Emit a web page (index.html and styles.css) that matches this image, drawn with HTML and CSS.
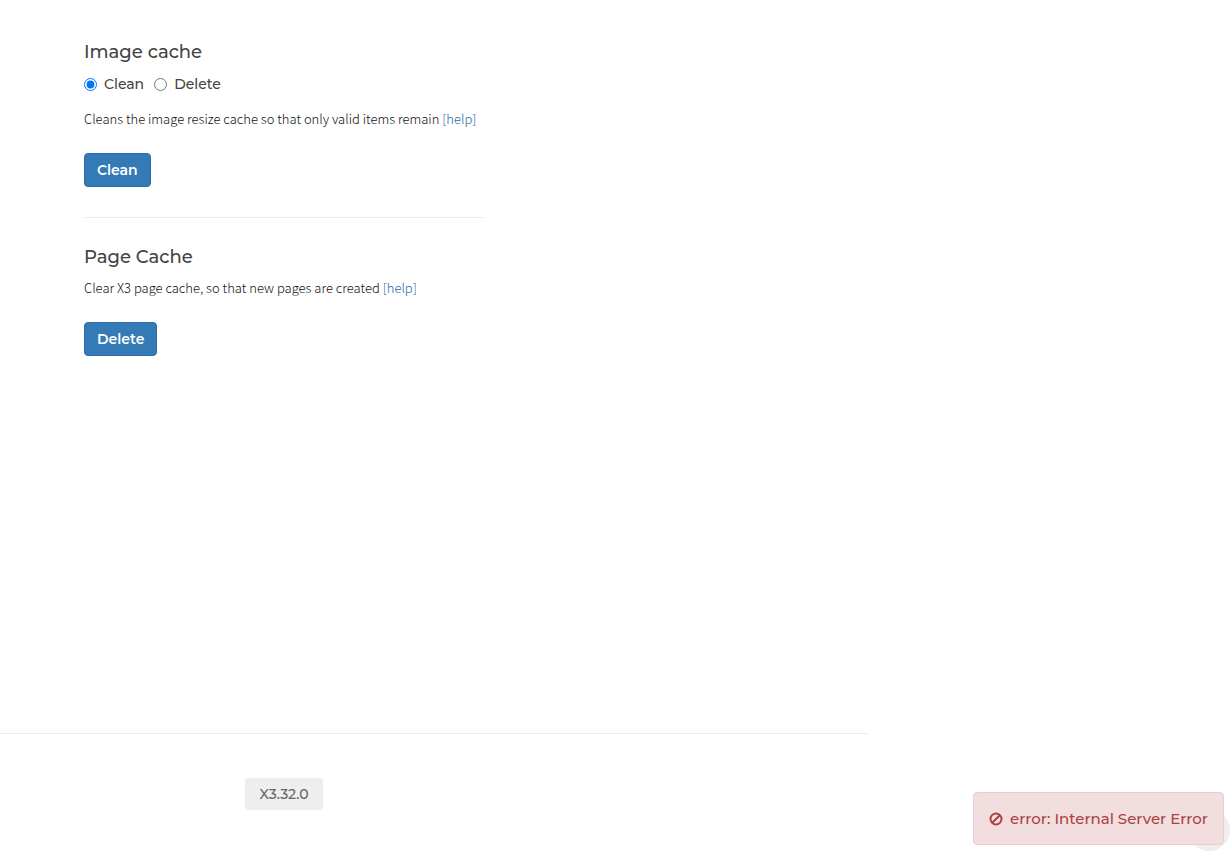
FILE: index.html
```
<!DOCTYPE html>
<html lang="en">
<head>
  <meta charset="UTF-8">
  <meta name="viewport" content="width=device-width, initial-scale=1.0">
  <title>Cache</title>
  <link rel="stylesheet" href="styles.css">
</head>
<body>
  <main class="content">
    <form class="cache-form">
      <h4>Image cache</h4>
      <div class="radio-group">
        <label class="radio-inline"><input type="radio" name="image-cache" value="clean" checked>Clean</label>
        <label class="radio-inline"><input type="radio" name="image-cache" value="delete">Delete</label>
      </div>
      <p class="description">Cleans the image resize cache so that only valid items remain <a href="#">[help]</a></p>
      <button type="button" class="btn">Clean</button>
    </form>

    <hr>

    <form class="cache-form">
      <h4>Page Cache</h4>
      <p class="description">Clear X3 page cache, so that new pages are created <a href="#">[help]</a></p>
      <button type="button" class="btn">Delete</button>
    </form>
  </main>

  <footer class="footer">
    <span class="version">X3.32.0</span>
  </footer>

  <div class="corner-dot"></div>

  <!-- notification -->
  <div class="alert" role="alert">
    <svg class="alert-icon" viewBox="0 0 14 14" aria-hidden="true">
      <circle cx="7" cy="7" r="5.5"/>
      <path d="M3.2 10.8 L10.8 3.2"/>
    </svg>
    <span>error: Internal Server Error</span>
  </div>
</body>
</html>
```

FILE: styles.css
```
* {
  box-sizing: border-box;
}

body {
  display: flex;
  flex-direction: column;
  min-height: 100vh;
  margin: 0;
  background-color: #fff;
  color: #444;
  font-family: Montserrat, Inter, "Liberation Sans", sans-serif;
  font-size: 14px;
  font-weight: 500;
  line-height: 20px;
}

.content {
  flex: 1;
  width: 100%;
  max-width: 568px;
  padding: 42px 84px 40px;
}

h4 {
  margin: 0 0 12px;
  font-size: 18px;
  font-weight: 500;
  line-height: 20px;
}

.radio-group {
  display: flex;
  gap: 10px;
  margin-bottom: 15px;
}

.radio-inline {
  display: flex;
  align-items: center;
  gap: 7px;
  cursor: pointer;
}

.radio-inline input {
  width: 13px;
  height: 13px;
  margin: 0;
}

.description {
  margin: 0 0 24px;
  color: #111;
  font-family: "Noto Sans CJK SC", sans-serif;
  font-size: 13px;
  font-weight: 300;
  line-height: 20px;
}

h4 + .description {
  margin-top: -1px;
}

.description a {
  color: #1f68a8;
  text-decoration: none;
}

.btn {
  display: block;
  height: 34px;
  padding: 0 12px;
  border: 1px solid #2e6da4;
  border-radius: 4px;
  background-color: #337ab7;
  color: #fff;
  font-family: inherit;
  font-size: 14px;
  font-weight: 600;
  line-height: 20px;
  cursor: pointer;
}

hr {
  margin: 30px 0 29px;
  border: 0;
  border-top: 1px solid #eee;
}

.footer {
  display: flex;
  justify-content: center;
  margin-right: 364px;
  padding: 44px 300px 49px 0;
  border-top: 1px solid #eee;
}

.version {
  padding: 6px 14px;
  border-radius: 3px;
  background-color: #eee;
  color: #666;
}

.corner-dot {
  position: fixed;
  right: 2px;
  bottom: 8px;
  width: 42px;
  height: 42px;
  border-radius: 50%;
  background-color: #eee;
}

.alert {
  position: fixed;
  right: 8px;
  bottom: 14px;
  display: flex;
  align-items: center;
  gap: 7px;
  padding: 16px 15px 15px;
  border: 1px solid #ebccd1;
  border-radius: 4px;
  background-color: #f2dede;
  color: #a94442;
  font-size: 15px;
}

.alert-icon {
  width: 14px;
  height: 14px;
  fill: none;
  stroke: currentColor;
  stroke-width: 2;
}
```
